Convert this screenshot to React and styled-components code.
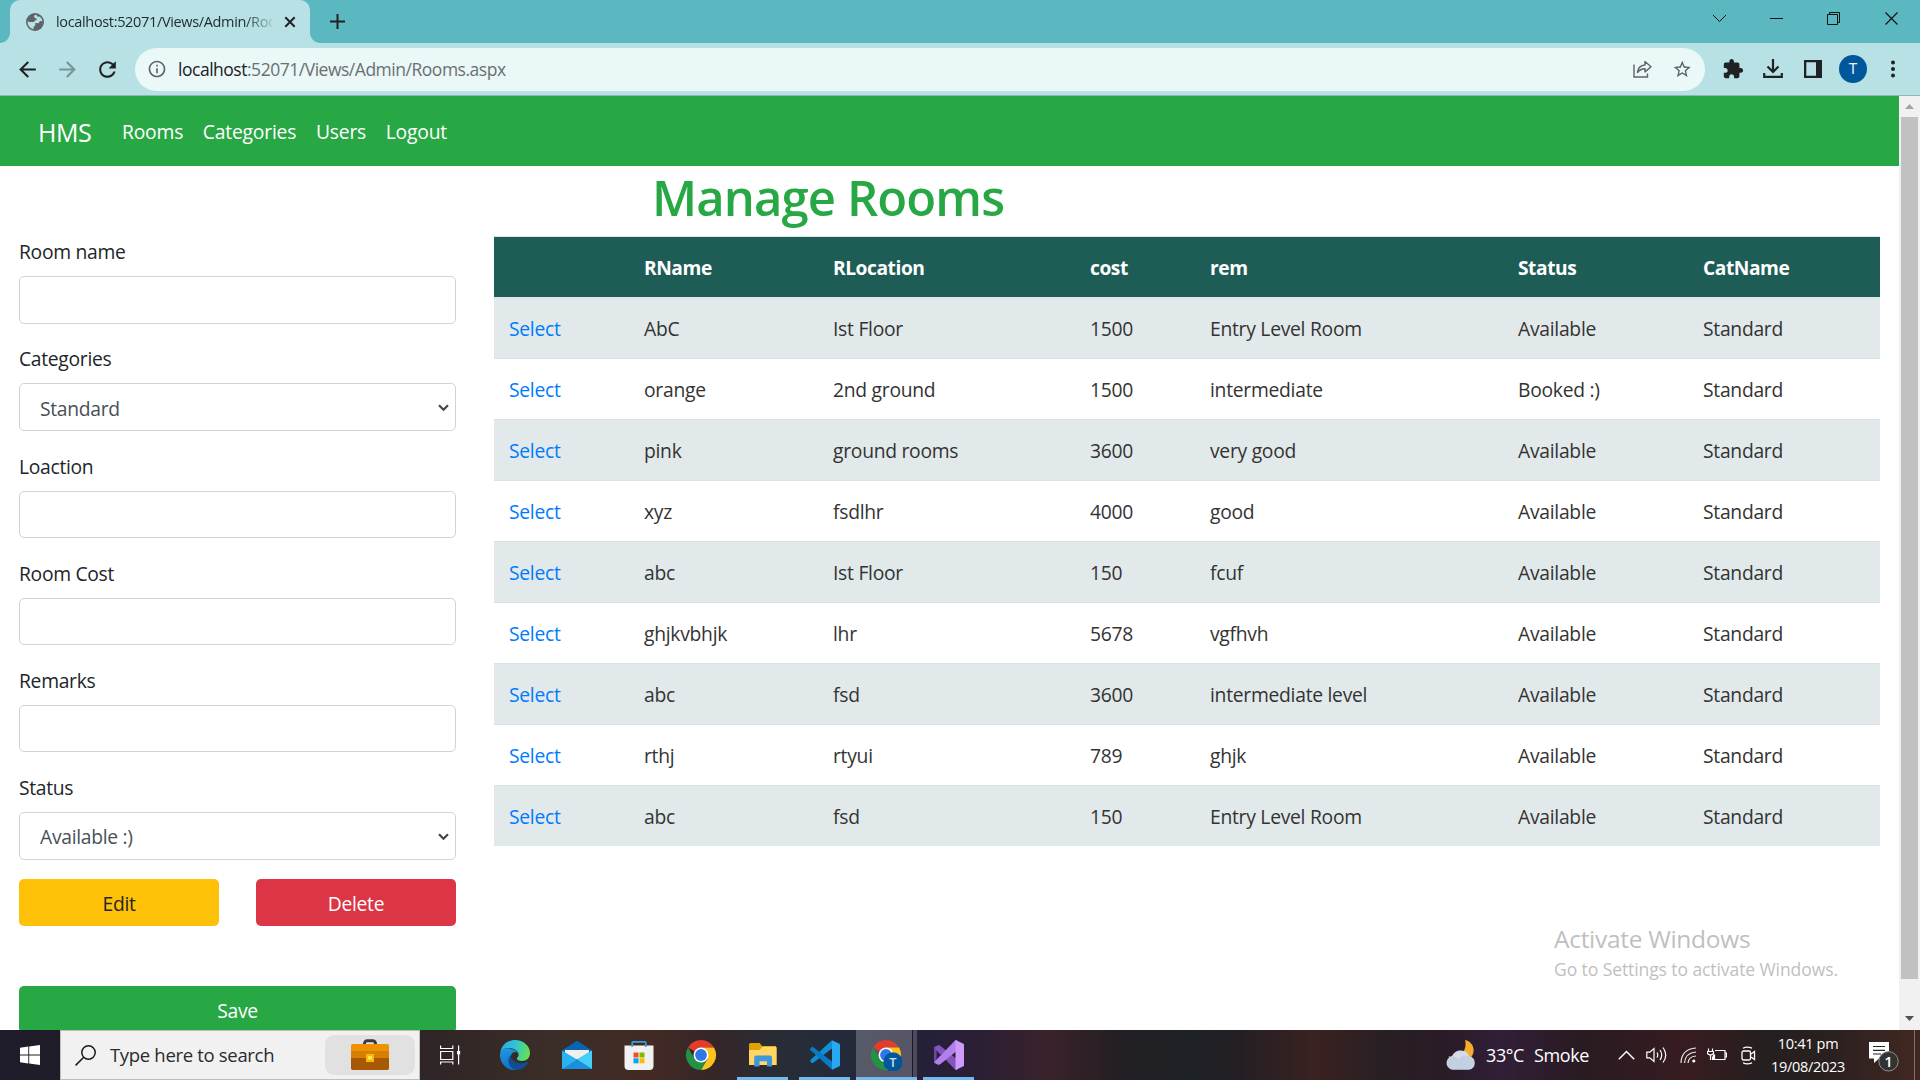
import React from "react";
import styled, { createGlobalStyle, css } from "styled-components";

const GlobalStyle = createGlobalStyle`
  * { box-sizing: border-box; }
  html, body { margin: 0; padding: 0; overflow: hidden; background: #fff; }
  body { font-family: "Open Sans", "Noto Sans", sans-serif; color: #212529; }
  svg { display: block; flex: none; }
`;

const Screen = styled.div`
  width: 1920px;
  height: 1080px;
  display: flex;
  flex-direction: column;
  overflow: hidden;
  position: relative;
`;

/* ---------- Browser frame ---------- */

const TabStrip = styled.div`
  height: 43px;
  flex: none;
  display: flex;
  background: #5bb8c1;
  padding-left: 10px;
`;

const Tab = styled.div`
  position: relative;
  width: 300px;
  height: 43px;
  background: #b7e1e4;
  border-radius: 10px 10px 0 0;
  display: flex;
  align-items: center;
  padding: 0 11px 0 14px;

  &::before,
  &::after {
    content: "";
    position: absolute;
    bottom: 0;
    width: 10px;
    height: 10px;
  }
  &::before {
    left: -10px;
    background: radial-gradient(circle at 0 0, transparent 9.5px, #b7e1e4 10.2px);
  }
  &::after {
    right: -10px;
    background: radial-gradient(circle at 100% 0, transparent 9.5px, #b7e1e4 10.2px);
  }
`;

const TabTitle = styled.div`
  flex: 1;
  margin-left: 10px;
  margin-right: 9px;
  overflow: hidden;
  white-space: nowrap;
  font-size: 14.5px;
  line-height: 20px;
  letter-spacing: -0.34px;
  color: #1d2b2d;
  mask-image: linear-gradient(90deg, #000 87%, transparent 102%);
`;

const NewTab = styled.div`
  width: 55px;
  display: flex;
  align-items: center;
  justify-content: center;
`;

const WindowControls = styled.div`
  margin-left: auto;
  display: flex;
  height: 37px;
`;

const WindowButton = styled.div`
  width: ${(p) => p.$w || 57}px;
  display: flex;
  align-items: center;
  justify-content: center;
`;

const Toolbar = styled.div`
  height: 53px;
  flex: none;
  display: flex;
  align-items: center;
  background: #b7e1e4;
  border-bottom: 1px solid #92b4b7;
  padding: 0 7px;
`;

const ToolButton = styled.div`
  width: 40px;
  height: 40px;
  display: flex;
  align-items: center;
  justify-content: center;
  color: ${(p) => p.$color || "#202124"};
`;

const Omnibox = styled.div`
  flex: 1;
  height: 43px;
  margin: 0 8px;
  border-radius: 22px;
  background: #ebf8f8;
  display: flex;
  align-items: center;
  padding: 0 3px 0 12px;
`;

const Url = styled.div`
  flex: 1;
  margin-left: 11px;
  font-size: 17.5px;
  letter-spacing: -0.48px;
  color: #6a6f71;
  b { font-weight: 400; color: #202124; }
`;

const Avatar = styled.div`
  width: 28px;
  height: 28px;
  border-radius: 50%;
  background: #01579b;
  color: #e8eef5;
  font: 15px Roboto, sans-serif;
  display: flex;
  align-items: center;
  justify-content: center;
`;

/* ---------- Page ---------- */

const Viewport = styled.div`
  height: 934px;
  flex: none;
  display: flex;
  overflow: hidden;
`;

const Page = styled.main`
  width: 1899px;
  height: 934px;
  overflow: hidden;
`;

const Navbar = styled.nav`
  height: 70px;
  background: #28a745;
  color: #fff;
  display: flex;
  align-items: center;
  padding: 1px 0 0 38px;
`;

const Brand = styled.span`
  font-size: 25px;
  letter-spacing: -0.4px;
  line-height: 34px;
  width: 84px;
`;

const NavLink = styled.a`
  font-size: 19.3px;
  letter-spacing: -0.2px;
  margin-right: 19.7px;
`;

const Title = styled.h1`
  margin: 0;
  height: 70px;
  padding-left: 652px;
  font-size: 49px;
  line-height: 62px;
  font-weight: 600;
  letter-spacing: -0.9px;
  color: #28a745;
`;

const Columns = styled.div`
  display: flex;
  align-items: flex-start;
`;

const Form = styled.form`
  width: 456px;
  margin-right: 38px;
  padding: 0.2px 0 0 19px;
  flex: none;
`;

const Field = styled.label`
  display: flex;
  flex-direction: column;
  height: 107.2px;
`;

const Caption = styled.span`
  height: 40px;
  line-height: 31px;
  font-size: 19.3px;
  letter-spacing: -0.3px;
`;

const Control = styled.span`
  height: 47.4px;
  border: 1px solid #ced4da;
  border-radius: 5px;
  display: flex;
  align-items: center;
  justify-content: space-between;
  padding: 2px 6px 0 20px;
  font-size: 19.3px;
  letter-spacing: -0.3px;
  color: #495057;
`;

const ButtonRow = styled.div`
  display: flex;
  gap: 37px;
  margin-bottom: 60px;
`;

const tones = {
  warning: css`background: #ffc107; color: #212529;`,
  danger: css`background: #dc3545; color: #fff;`,
  success: css`background: #28a745; color: #fff;`,
};

const Button = styled.button`
  flex: 1;
  width: ${(p) => (p.$block ? "100%" : "auto")};
  height: 47px;
  border: 0;
  border-radius: 5px;
  font: 19.3px/30px "Open Sans", sans-serif;
  letter-spacing: -0.3px;
  padding: 3px 0 0;
  ${(p) => tones[p.$tone]}
`;

const Table = styled.table`
  width: 1386px;
  table-layout: fixed;
  border-collapse: separate;
  border-spacing: 0;
`;

const Th = styled.th`
  height: 61px;
  padding: 1px 0 0 15px;
  text-align: left;
  font-size: 19.2px;
  font-weight: 700;
  letter-spacing: -0.45px;
  color: #fff;
  background: #1e5d56;
  border-top: 1px solid #dee2e6;
`;

const Td = styled.td`
  height: 61px;
  padding: 1px 0 0 15px;
  font-size: 19.3px;
  letter-spacing: -0.27px;
  color: ${(p) => (p.$link ? "#007bff" : "#333")};
  border-top: 1px solid #dee2e6;
`;

const Tr = styled.tr`
  background: ${(p) => (p.$striped ? "#e2e9ea" : "#fff")};
`;

const Scrollbar = styled.div`
  width: 21px;
  background: #f1f1f1;
  display: flex;
  flex-direction: column;
  align-items: center;
  justify-content: space-between;
  height: 934px;
`;

const ScrollArrow = styled.div`
  height: ${(p) => p.$h || 21}px;
  display: flex;
  align-items: center;
`;

const Thumb = styled.div`
  width: 17px;
  height: 862px;
  background: #c1c1c1;
  margin-bottom: auto;
`;

const Watermark = styled.div`
  position: absolute;
  left: 1554px;
  top: 921px;
  color: #bfbfbf;
`;

const WatermarkTitle = styled.div`
  font-size: 24.5px;
  line-height: 36px;
  letter-spacing: -0.3px;
`;

const WatermarkText = styled.div`
  font-size: 17.5px;
  line-height: 24px;
  letter-spacing: -0.08px;
`;

/* ---------- Taskbar ---------- */

const Taskbar = styled.footer`
  height: 50px;
  flex: none;
  display: flex;
  background: linear-gradient(
    90deg,
    #1e1c2a 0, #252129 300px, #302526 440px, #3b2e28 545px, #432a24 650px,
    #352628 715px, #2a2c33 765px, #242c3b 830px, #242038 925px, #2c1f35 985px,
    #3a222b 1050px, #241f24 1115px, #1e2226 1190px, #241f25 1240px, #3a2220 1315px,
    #281f24 1385px, #2a1c27 1445px, #311f38 1500px, #291b22 1580px, #371c20 1690px,
    #251f1f 1765px, #2a2020 1830px, #402722 1910px
  );
`;

const Start = styled.div`
  width: 60px;
  display: flex;
  align-items: center;
  justify-content: center;
`;

const Search = styled.div`
  width: 360px;
  height: 50px;
  background: #f1f1f1;
  border: 1px solid #bdbdbd;
  display: flex;
  align-items: center;
  padding: 0 4px 0 14px;
  color: #2b2b2b;
  font-size: 18.5px;
  letter-spacing: -0.32px;
`;

const SearchText = styled.span`
  flex: 1;
  margin-left: 14px;
  padding-bottom: 1px;
`;

const SearchHighlight = styled.div`
  width: 90px;
  height: 40px;
  border-radius: 9px;
  background: #e1e1e1;
  display: flex;
  justify-content: center;
  padding-top: 4px;
`;

const TaskButton = styled.div`
  width: 62px;
  height: 50px;
  display: flex;
  align-items: center;
  justify-content: center;
  padding-right: ${(p) => (p.$active ? 2 : 0)}px;
  background: ${(p) =>
    p.$active
      ? "linear-gradient(90deg, rgba(255,255,255,.23) 56px, rgba(0,0,0,.3) 56px, rgba(0,0,0,.3) 57px, rgba(255,255,255,.18) 57px, rgba(255,255,255,.18) 61px, transparent 61px)"
      : "none"};
  position: relative;

  ${(p) =>
    p.$running &&
    css`
      &::after {
        content: "";
        position: absolute;
        bottom: 0;
        left: ${p.$active ? 0 : 5}px;
        width: ${p.$active ? 61 : 51}px;
        height: 3px;
        background: #76b9ed;
      }
    `}
`;

const TaskView = styled.div`
  width: 64px;
  height: 50px;
  display: flex;
  align-items: center;
  padding-left: 20px;
`;

const Tray = styled.div`
  margin-left: auto;
  display: flex;
  align-items: center;
  color: #fff;
`;

const Weather = styled.div`
  display: flex;
  align-items: center;
  font-size: 18px;
  letter-spacing: -0.4px;
  width: 172px;
  span { margin-left: 10px; }
`;

const TrayIcon = styled.div`
  width: ${(p) => p.$w}px;
  display: flex;
  align-items: center;
`;

const Clock = styled.div`
  width: 84px;
  font-size: 14.5px;
  line-height: 23px;
  letter-spacing: -0.3px;
  text-align: center;
`;

const ShowDesktop = styled.div`
  width: 6px;
  height: 50px;
  border-left: 1px solid #7c6f6c;
`;

/* ---------- Icons ---------- */

const Glyph = ({ d, size = 24, fill = "currentColor" }) => (
  <svg width={size} height={size} viewBox="0 0 24 24" fill={fill}><path d={d} /></svg>
);

const paths = {
  back: "M20 11H7.83l5.59-5.59L12 4l-8 8 8 8 1.41-1.41L7.83 13H20v-2z",
  forward: "M12 4l-1.41 1.41L16.17 11H4v2h12.17l-5.58 5.59L12 20l8-8z",
  reload: "M17.65 6.35C16.2 4.9 14.21 4 12 4c-4.42 0-7.99 3.58-7.99 8s3.57 8 7.99 8c3.73 0 6.84-2.55 7.73-6h-2.08c-.82 2.33-3.04 4-5.65 4-3.31 0-6-2.69-6-6s2.69-6 6-6c1.66 0 3.14.69 4.22 1.78L13 11h7V4l-2.35 2.35z",
  puzzle: "M20.5 11H19V7c0-1.1-.9-2-2-2h-4V3.5C13 2.12 11.88 1 10.5 1S8 2.12 8 3.5V5H4c-1.1 0-1.99.9-1.99 2v3.8H3.5c1.49 0 2.7 1.21 2.7 2.7s-1.21 2.7-2.7 2.7H2V20c0 1.1.9 2 2 2h3.8v-1.5c0-1.49 1.21-2.7 2.7-2.7 1.49 0 2.7 1.21 2.7 2.7V22H17c1.1 0 2-.9 2-2v-4h1.5c1.38 0 2.5-1.12 2.5-2.5S21.88 11 20.5 11z",
  star: "M22 9.24l-7.19-.62L12 2 9.19 8.63 2 9.24l5.46 4.73L5.82 21 12 17.27 18.18 21l-1.63-7.03L22 9.24zM12 15.4l-3.76 2.27 1-4.28-3.32-2.88 4.38-.38L12 6.1l1.71 4.04 4.38.38-3.32 2.88 1 4.28L12 15.4z",
  globe: "M12 2C6.48 2 2 6.48 2 12s4.48 10 10 10 10-4.48 10-10S17.52 2 12 2zm-1 17.93c-3.95-.49-7-3.85-7-7.93 0-.62.08-1.21.21-1.79L9 15v1c0 1.1.9 2 2 2v1.93zm6.9-2.54c-.26-.81-1-1.39-1.9-1.39h-1v-3c0-.55-.45-1-1-1H8v-2h2c.55 0 1-.45 1-1V7h2c1.1 0 2-.9 2-2v-.41c2.93 1.19 5 4.06 5 7.41 0 2.08-.8 3.97-2.1 5.39z",
  info: "M11 17h2v-6h-2v6zm1-15C6.48 2 2 6.48 2 12s4.48 10 10 10 10-4.48 10-10S17.52 2 12 2zm0 18c-4.41 0-8-3.59-8-8s3.59-8 8-8 8 3.59 8 8-3.59 8-8 8zM11 9h2V7h-2v2z",
};

const Stroke = ({ w, h, children, color = "#111", sw = 1 }) => (
  <svg width={w} height={h} viewBox={`0 0 ${w} ${h}`} fill="none" stroke={color} strokeWidth={sw}>
    {children}
  </svg>
);

const GlobeIcon = () => (
  <svg width="22" height="22" viewBox="0 0 22 22">
    <circle cx="11" cy="11" r="9" fill="#5f6368" />
    <path d="M11.500 3.800c-1.500.6-1.800 1.600-1 2.600.7.900 2 .4 2.300 1.500.2 1-.9 1.200-1.800 1.600-1 .5-.5 1.500-1.500 1.500H5.200l-1.600-.9A7.500 7.500 0 0 0 9.500 18.300v-1.700c0-1.300 1.200-1 1.700-2 .4-.9-.4-1.600.2-2.300.8-.9 2.300.3 3.300-.4.9-.6.6-1.700 1.500-1.900.7-.2 1.500.3 2.200.3A7.500 7.500 0 0 0 15.800 5.400c-.9.5-2 .4-2.500-.2-.3-.5-.9-1.200-1.800-1.400z" fill="#b7e1e4" />
  </svg>
);

const SelectArrow = () => (
  <Stroke w={11} h={8} color="#40474e" sw={2.2}><path d="M1 1.2l4.5 4.6L10 1.2" /></Stroke>
);

const ChromeLogo = ({ badge }) => (
  <svg width="32" height="32" viewBox="0 0 32 32">
    <path d="M16 1A15 15 0 0 1 29 8.500H16L16 16L3 8.500A15 15 0 0 1 16 1z" fill="#e33b2e" />
    <path d="M29 8.500A15 15 0 0 1 16 31L22.500 19.750L16 8.500z" fill="#fcc31e" />
    <path d="M3 8.500A15 15 0 0 0 16 31L22.500 19.750L9.500 19.750z" fill="#229342" />
    <circle cx="16" cy="16" r="7.500" fill="#fff" />
    <circle cx="16" cy="16" r="5.900" fill="#2f76e8" />
    {badge && (
      <>
        <circle cx="23" cy="23" r="9.700" fill="#01579b" />
        <text x="23" y="27.500" fontSize="12" fontWeight="500" fontFamily="Roboto" textAnchor="middle" fill="#cfe0ee">T</text>
      </>
    )}
  </svg>
);

const EdgeLogo = () => (
  <svg width="30" height="30" viewBox="0 0 30 30">
    <defs>
      <linearGradient id="edgeTop" x1="0" y1="0.3" x2="1" y2="0.5">
        <stop offset="0" stopColor="#2aa9e6" /><stop offset=".5" stopColor="#32c6d0" /><stop offset="1" stopColor="#66e04c" />
      </linearGradient>
      <linearGradient id="edgeLeft" x1="0" y1="0" x2=".3" y2="1">
        <stop offset="0" stopColor="#1e9be0" /><stop offset="1" stopColor="#1470c8" />
      </linearGradient>
    </defs>
    <path d="M0.4 13C1 5.5 7.3 0 15 0c8.500 0 15 6 15 13 0 5-3.600 8-8 8-4 0-5.500-1.600-5-3 1.600-1.600 2-3.500 1-5.500C16 8 4 5 0.4 13z" fill="url(#edgeTop)" />
    <path d="M0 15C0 10 5 7.500 10 8.500c4 .8 7 2.500 8 5-2-2.300-6-1.800-7 2-1.500 6 4.500 11.500 11 11.500-2 2-5 3-7.500 3C6.500 30 0 23.500 0 15z" fill="url(#edgeLeft)" />
    <path d="M11 15c-1.700 1.500-3 4-2.300 7.500C9.600 26.500 12.500 29.500 16 30c5 0 9.500-2.500 12-7 .3-.8-.4-1.300-1-.9-2 1.100-4.500 1.500-7 1.100C14.500 22.500 10 19 11 15z" fill="#114c94" />
  </svg>
);

const MailLogo = () => (
  <svg width="30" height="28" viewBox="0 0 30 28">
    <path d="M0 9.500L13.500.6a2.500 2.500 0 0 1 3 0L30 9.500V14H0z" fill="#0a64b4" />
    <path d="M3 9h24v9H3z" fill="#f0f0f0" />
    <path d="M0 9.500L15 18.500 30 9.500V28H0z" fill="#29b4ee" />
    <path d="M15 18.500L30 9.500V28z" fill="#46cdf8" />
    <path d="M0 28L15 18.500 30 28z" fill="#1b8fdd" />
  </svg>
);

const StoreLogo = () => (
  <svg width="30" height="30" viewBox="0 0 30 30">
    <path d="M.5 5.500h29V26a4 4 0 0 1-4 4h-21a4 4 0 0 1-4-4z" fill="#f1f1f1" />
    <path d="M8.200 7V2.800c0-.6.400-1 1-1h11.600c.6 0 1 .4 1 1V7" fill="none" stroke="#2fa3e6" strokeWidth="1.700" />
    <path d="M9.500 12.500h5v5h-5z" fill="#f25022" /><path d="M15.500 12.500h5v5h-5z" fill="#7fba00" />
    <path d="M9.500 18.300h5v5h-5z" fill="#00a4ef" /><path d="M15.500 18.300h5v5h-5z" fill="#ffb900" />
  </svg>
);

const ExplorerLogo = () => (
  <svg width="28" height="24" viewBox="0 0 28 24">
    <path d="M0 1.500A1.500 1.500 0 0 1 1.500 0h9.200l2.300 3H27v8H0z" fill="#e0a006" />
    <path d="M0 7h10.500l3-3.200H26.500a1.200 1.200 0 0 1 1.200 1.200V22H0z" fill="#ffd563" />
    <path d="M5.200 23.500V14.500A2 2 0 0 1 7.200 12.500H21a2 2 0 0 1 2 2v9h-5V18.200h-7.500v5.300z" fill="#3e97dd" />
  </svg>
);

const VSCodeLogo = () => (
  <svg width="30" height="30" viewBox="0 0 30 30">
    <path d="M22 8.500L3.300 22.800a1.200 1.200 0 0 1-1.600 0L.4 21.600a1.200 1.200 0 0 1 0-1.700L22 .3z" fill="#0f8fd6" />
    <path d="M22 21.500L3.300 7.200a1.200 1.200 0 0 0-1.600 0L.4 8.400a1.200 1.200 0 0 0 0 1.700L22 29.700z" fill="#087bc4" />
    <path d="M22 .2L29 3.500a1.600 1.600 0 0 1 1 1.500v20a1.600 1.600 0 0 1-1 1.500L22 29.800z" fill="#28a8f0" />
  </svg>
);

const VisualStudioLogo = () => (
  <svg width="30" height="30" viewBox="0 0 30 30">
    <path d="M0 7.500L3.500 5.500 6 8v14L3.500 24.500 0 22.500z" fill="#6d45a5" />
    <path d="M2.600 10.200V19.800L6.500 15z" fill="#2a2238" />
    <path d="M0 7.500L3.500 5.600c1-.4 2-.4 3 .4L24 20v9.500L21.500 30 2.600 10.300z" fill="#8255bd" />
    <path d="M2.600 19.800L21.500 0 24 1v9L6.500 24c-1 .8-2 .8-3 .4L0 22.500z" fill="#b180ea" />
    <path d="M21.500 0L29 3.500a1.600 1.600 0 0 1 1 1.500v20a1.600 1.600 0 0 1-1 1.500L21.500 30z" fill="#cf9afb" />
  </svg>
);

const Briefcase = () => (
  <svg width="38" height="32" viewBox="0 0 38 32">
    <path d="M13.500 6V4.500A2.800 2.800 0 0 1 16.300 1.700h5.400a2.800 2.800 0 0 1 2.800 2.800V6" fill="none" stroke="#3a3a3c" strokeWidth="3" />
    <rect y="5" width="38" height="26" rx="2" fill="#ee9203" />
    <path d="M0 12h38v7H0z" fill="#d67f02" />
    <path d="M0 19h38v10a2 2 0 0 1-2 2H2a2 2 0 0 1-2-2z" fill="#a75804" />
    <rect x="15" y="15" width="8" height="8" fill="#f2bd00" /><rect x="17" y="17" width="4" height="3.500" fill="#ffe54a" />
  </svg>
);

const WeatherIcon = () => (
  <svg width="30" height="30" viewBox="0 0 30 30">
    <path d="M19 0c8 1.500 11.500 10.500 6 17.500L15 14C19 11 20.500 5 19 0z" fill="#f6ac2c" />
    <path d="M2.500 16l3 1-2 2z" fill="#f09a20" />
    <path d="M7 29.500a7 7 0 0 1-1-13.500A9.500 9.500 0 0 1 23.500 16.500 6.600 6.600 0 0 1 23 29.500z" fill="#d3dce8" />
    <path d="M7 29.500A6.500 6.500 0 1 1 12.500 19.500 7 7 0 0 1 24 18a6 6 0 0 1-1 11.500z" fill="#c3d0e2" />
  </svg>
);

/* ---------- Data ---------- */

const headers = [
  ["", 135], ["RName", 189], ["RLocation", 257], ["cost", 120],
  ["rem", 308], ["Status", 185], ["CatName", 192],
];

const rows = [
  ["AbC", "Ist Floor", "1500", "Entry Level Room", "Available"],
  ["orange", "2nd ground", "1500", "intermediate", "Booked :)"],
  ["pink", "ground rooms", "3600", "very good", "Available"],
  ["xyz", "fsdlhr", "4000", "good", "Available"],
  ["abc", "Ist Floor", "150", "fcuf", "Available"],
  ["ghjkvbhjk", "lhr", "5678", "vgfhvh", "Available"],
  ["abc", "fsd", "3600", "intermediate level", "Available"],
  ["rthj", "rtyui", "789", "ghjk", "Available"],
  ["abc", "fsd", "150", "Entry Level Room", "Available"],
];

const fields = [
  ["Room name"], ["Categories", "Standard"], ["Loaction"],
  ["Room Cost"], ["Remarks"], ["Status", "Available :)"],
];

function BrowserFrame() {
  return (
    <>
      <TabStrip>
        <Tab>
          <GlobeIcon />
          <TabTitle>localhost:52071/Views/Admin/Rooms.aspx</TabTitle>
          <Stroke w={18} h={18} color="#202124" sw={2}><path d="M4.300 4.300l9.400 9.400M13.700 4.300l-9.400 9.400" /></Stroke>
        </Tab>
        <NewTab>
          <Stroke w={15} h={15} color="#202124" sw={2}><path d="M7.500 0v15M0 7.500h15" /></Stroke>
        </NewTab>
        <WindowControls>
          <WindowButton><Stroke w={15} h={9}><path d="M1 1l6.500 6.500L14 1" /></Stroke></WindowButton>
          <WindowButton><Stroke w={13} h={1} sw={2}><path d="M0 0h13" /></Stroke></WindowButton>
          <WindowButton><Stroke w={13} h={13}><path d="M.5 2.500h10v10H.5zM2.500 2.500V.5h10v10h-2" /></Stroke></WindowButton>
          <WindowButton $w={58}><Stroke w={13} h={13} sw={1.200}><path d="M.5.5l12 12M12.500.5l-12 12" /></Stroke></WindowButton>
        </WindowControls>
      </TabStrip>
      <Toolbar>
        <ToolButton><Glyph d={paths.back} size={25} /></ToolButton>
        <ToolButton $color="#76959a"><Glyph d={paths.forward} size={25} /></ToolButton>
        <ToolButton><Glyph d={paths.reload} size={25} /></ToolButton>
        <Omnibox>
          <Glyph d={paths.info} size={20} fill="#5f6368" />
          <Url><b>localhost</b>:52071/Views/Admin/Rooms.aspx</Url>
          <ToolButton>
            <Stroke w={19} h={18} color="#5f6368" sw={1.400}>
              <path d="M1 4.500V17h13.500v-3.500" />
              <path d="M4.500 12.500c.5-4.500 3-7.200 7.500-7.500V1.500l6 5.200-6 5.200V8.700c-3.500 0-5.500 1-7.500 3.800z" strokeLinejoin="round" />
            </Stroke>
          </ToolButton>
          <ToolButton $color="#5f6368"><Glyph d={paths.star} size={20.5} /></ToolButton>
        </Omnibox>
        <ToolButton><Glyph d={paths.puzzle} size={22} /></ToolButton>
        <ToolButton>
          <Stroke w={20} h={20} color="#202124" sw={2.200}>
            <path d="M10 0v12M4.500 7.500L10 13l5.500-5.500M1.200 14v3.800h17.600V14" />
          </Stroke>
        </ToolButton>
        <ToolButton>
          <svg width="18" height="18" viewBox="0 0 18 18"><path fill="#202124" fillRule="evenodd" d="M0 0h18v18H0zM2.300 2.300v13.400H12V2.300z" /></svg>
        </ToolButton>
        <ToolButton><Avatar>T</Avatar></ToolButton>
        <ToolButton>
          <svg width="4" height="18" viewBox="0 0 4 18" fill="#202124"><circle cx="2" cy="2.500" r="2" /><circle cx="2" cy="9" r="2" /><circle cx="2" cy="15.500" r="2" /></svg>
        </ToolButton>
      </Toolbar>
    </>
  );
}

function RoomForm() {
  return (
    <Form>
      {fields.map(([label, value]) => (
        <Field key={label}>
          <Caption>{label}</Caption>
          <Control>{value}{value && <SelectArrow />}</Control>
        </Field>
      ))}
      <ButtonRow>
        <Button type="button" $tone="warning">Edit</Button>
        <Button type="button" $tone="danger">Delete</Button>
      </ButtonRow>
      <Button type="button" $tone="success" $block>Save</Button>
    </Form>
  );
}

function RoomTable() {
  return (
    <Table>
      <colgroup>{headers.map(([h, w]) => <col key={h} width={w} />)}</colgroup>
      <thead><tr>{headers.map(([h]) => <Th key={h}>{h}</Th>)}</tr></thead>
      <tbody>
        {rows.map((row, i) => (
          <Tr key={i} $striped={i % 2 === 0}>
            <Td $link>Select</Td>
            {row.map((cell, j) => <Td key={j}>{cell}</Td>)}
            <Td>Standard</Td>
          </Tr>
        ))}
      </tbody>
    </Table>
  );
}

function WindowsTaskbar() {
  return (
    <Taskbar>
      <Start>
        <svg width="20" height="20" viewBox="0 0 20 20" fill="#fff"><path d="M0 2.700L8.300 1.600V9.500H0zM9.200 1.500L20 0V9.500H9.200zM0 10.400h8.300v8L0 17.300zM9.200 10.400H20V20L9.200 18.500z" /></svg>
      </Start>
      <Search>
        <Stroke w={21} h={21} color="#1a1a1a" sw={1.500}><circle cx="13.500" cy="7.500" r="6.700" /><path d="M8.700 12.300L.6 20.400" /></Stroke>
        <SearchText>Type here to search</SearchText>
        <SearchHighlight><Briefcase /></SearchHighlight>
      </Search>
      <TaskView>
        <Stroke w={21} h={20} color="#fff" sw={1.200}>
          <path d="M.6.500V3.500H12.800V.500M.6 6.500h12.200v8H.6zM.6 19.500v-2.500h12.200v2.500M18.600.500v19" />
          <path d="M17 6h3.200v3.400H17z" fill="#fff" stroke="none" />
        </Stroke>
      </TaskView>
      <TaskButton><EdgeLogo /></TaskButton>
      <TaskButton><MailLogo /></TaskButton>
      <TaskButton><StoreLogo /></TaskButton>
      <TaskButton><ChromeLogo /></TaskButton>
      <TaskButton $running><ExplorerLogo /></TaskButton>
      <TaskButton $running><VSCodeLogo /></TaskButton>
      <TaskButton $running $active><ChromeLogo badge /></TaskButton>
      <TaskButton $running><VisualStudioLogo /></TaskButton>
      <Tray>
        <Weather><WeatherIcon /><span>33°C</span><span>Smoke</span></Weather>
        <TrayIcon $w={28}><Stroke w={17} h={10} color="#fff" sw={1.500}><path d="M.8 9.200L8.500 1.500l7.700 7.700" /></Stroke></TrayIcon>
        <TrayIcon $w={34}>
          <Stroke w={22} h={18} color="#fff" sw={1.200}><path d="M.8 6.200h3L8 2.500v13L3.800 11.800h-3zM11 6.500q1.500 2.500 0 5M14 4q3.400 5 0 10M17 1.500q5.500 7.500 0 15" /></Stroke>
        </TrayIcon>
        <TrayIcon $w={27}>
          <Stroke w={17} h={17} color="#e8e8e8" sw={1.200}>
            <path d="M1 16Q1.500 2 16 1M4.500 16Q5 6 16 5M8 16Q8.500 9.500 16 9" /><circle cx="13.800" cy="14" r="1.600" fill="#fff" stroke="none" />
          </Stroke>
        </TrayIcon>
        <TrayIcon $w={34}>
          <Stroke w={20} h={14} color="#fff" sw={1.200}>
            <path d="M8 2.500h10v9H5.500V8.500M18.500 5h1v4h-1M1.500.5v3M5.500.5v3M.5 3.500h6v2q-3 3-6 0zM3.500 7v5" /><path d="M6.500 7h1v4h-1z" fill="#fff" />
          </Stroke>
        </TrayIcon>
        <TrayIcon $w={25}>
          <Stroke w={15} h={19} color="#fff" sw={1.300}>
            <rect x="1" y="5" width="8.500" height="9" rx="1.500" /><path d="M10 8l3.500-2.500v8L10 11M2 2.200Q6 0 11 2.200M2 16.800Q6 19 11 16.800" />
          </Stroke>
        </TrayIcon>
        <Clock>10:41 pm<br />19/08/2023</Clock>
        <TrayIcon $w={64}>
          <svg width="50" height="34" viewBox="0 0 50 34">
            <path d="M19 4h20v16.500H29L24 25v-4.500h-5z" fill="#fff" />
            <path d="M23 8.500h12M23 12.300h12M23 16h8" stroke="#2a2020" strokeWidth="1.200" />
            <circle cx="38.500" cy="23.300" r="9.700" fill="#333334" stroke="#8f8f8f" />
            <text x="38.500" y="28.700" fontSize="15" fontFamily="Open Sans" fontWeight="600" textAnchor="middle" fill="#fff">1</text>
          </svg>
        </TrayIcon>
        <ShowDesktop />
      </Tray>
    </Taskbar>
  );
}

export default function App() {
  return (
    <Screen>
      <GlobalStyle />
      <BrowserFrame />
      <Viewport>
        <Page>
          <Navbar>
            <Brand>HMS</Brand>
            <NavLink>Rooms</NavLink>
            <NavLink>Categories</NavLink>
            <NavLink>Users</NavLink>
            <NavLink>Logout</NavLink>
          </Navbar>
          <Title>Manage Rooms</Title>
          <Columns>
            <RoomForm />
            <RoomTable />
          </Columns>
        </Page>
        <Scrollbar>
          <ScrollArrow><svg width="9" height="5" viewBox="0 0 9 5"><path d="M0 5L4.500 0 9 5z" fill="#a3a3a3" /></svg></ScrollArrow>
          <Thumb />
          <ScrollArrow $h={23}><svg width="9" height="5" viewBox="0 0 9 5"><path d="M0 0h9L4.500 5z" fill="#505050" /></svg></ScrollArrow>
        </Scrollbar>
      </Viewport>
      <WindowsTaskbar />
      <Watermark>
        <WatermarkTitle>Activate Windows</WatermarkTitle>
        <WatermarkText>Go to Settings to activate Windows.</WatermarkText>
      </Watermark>
    </Screen>
  );
}
